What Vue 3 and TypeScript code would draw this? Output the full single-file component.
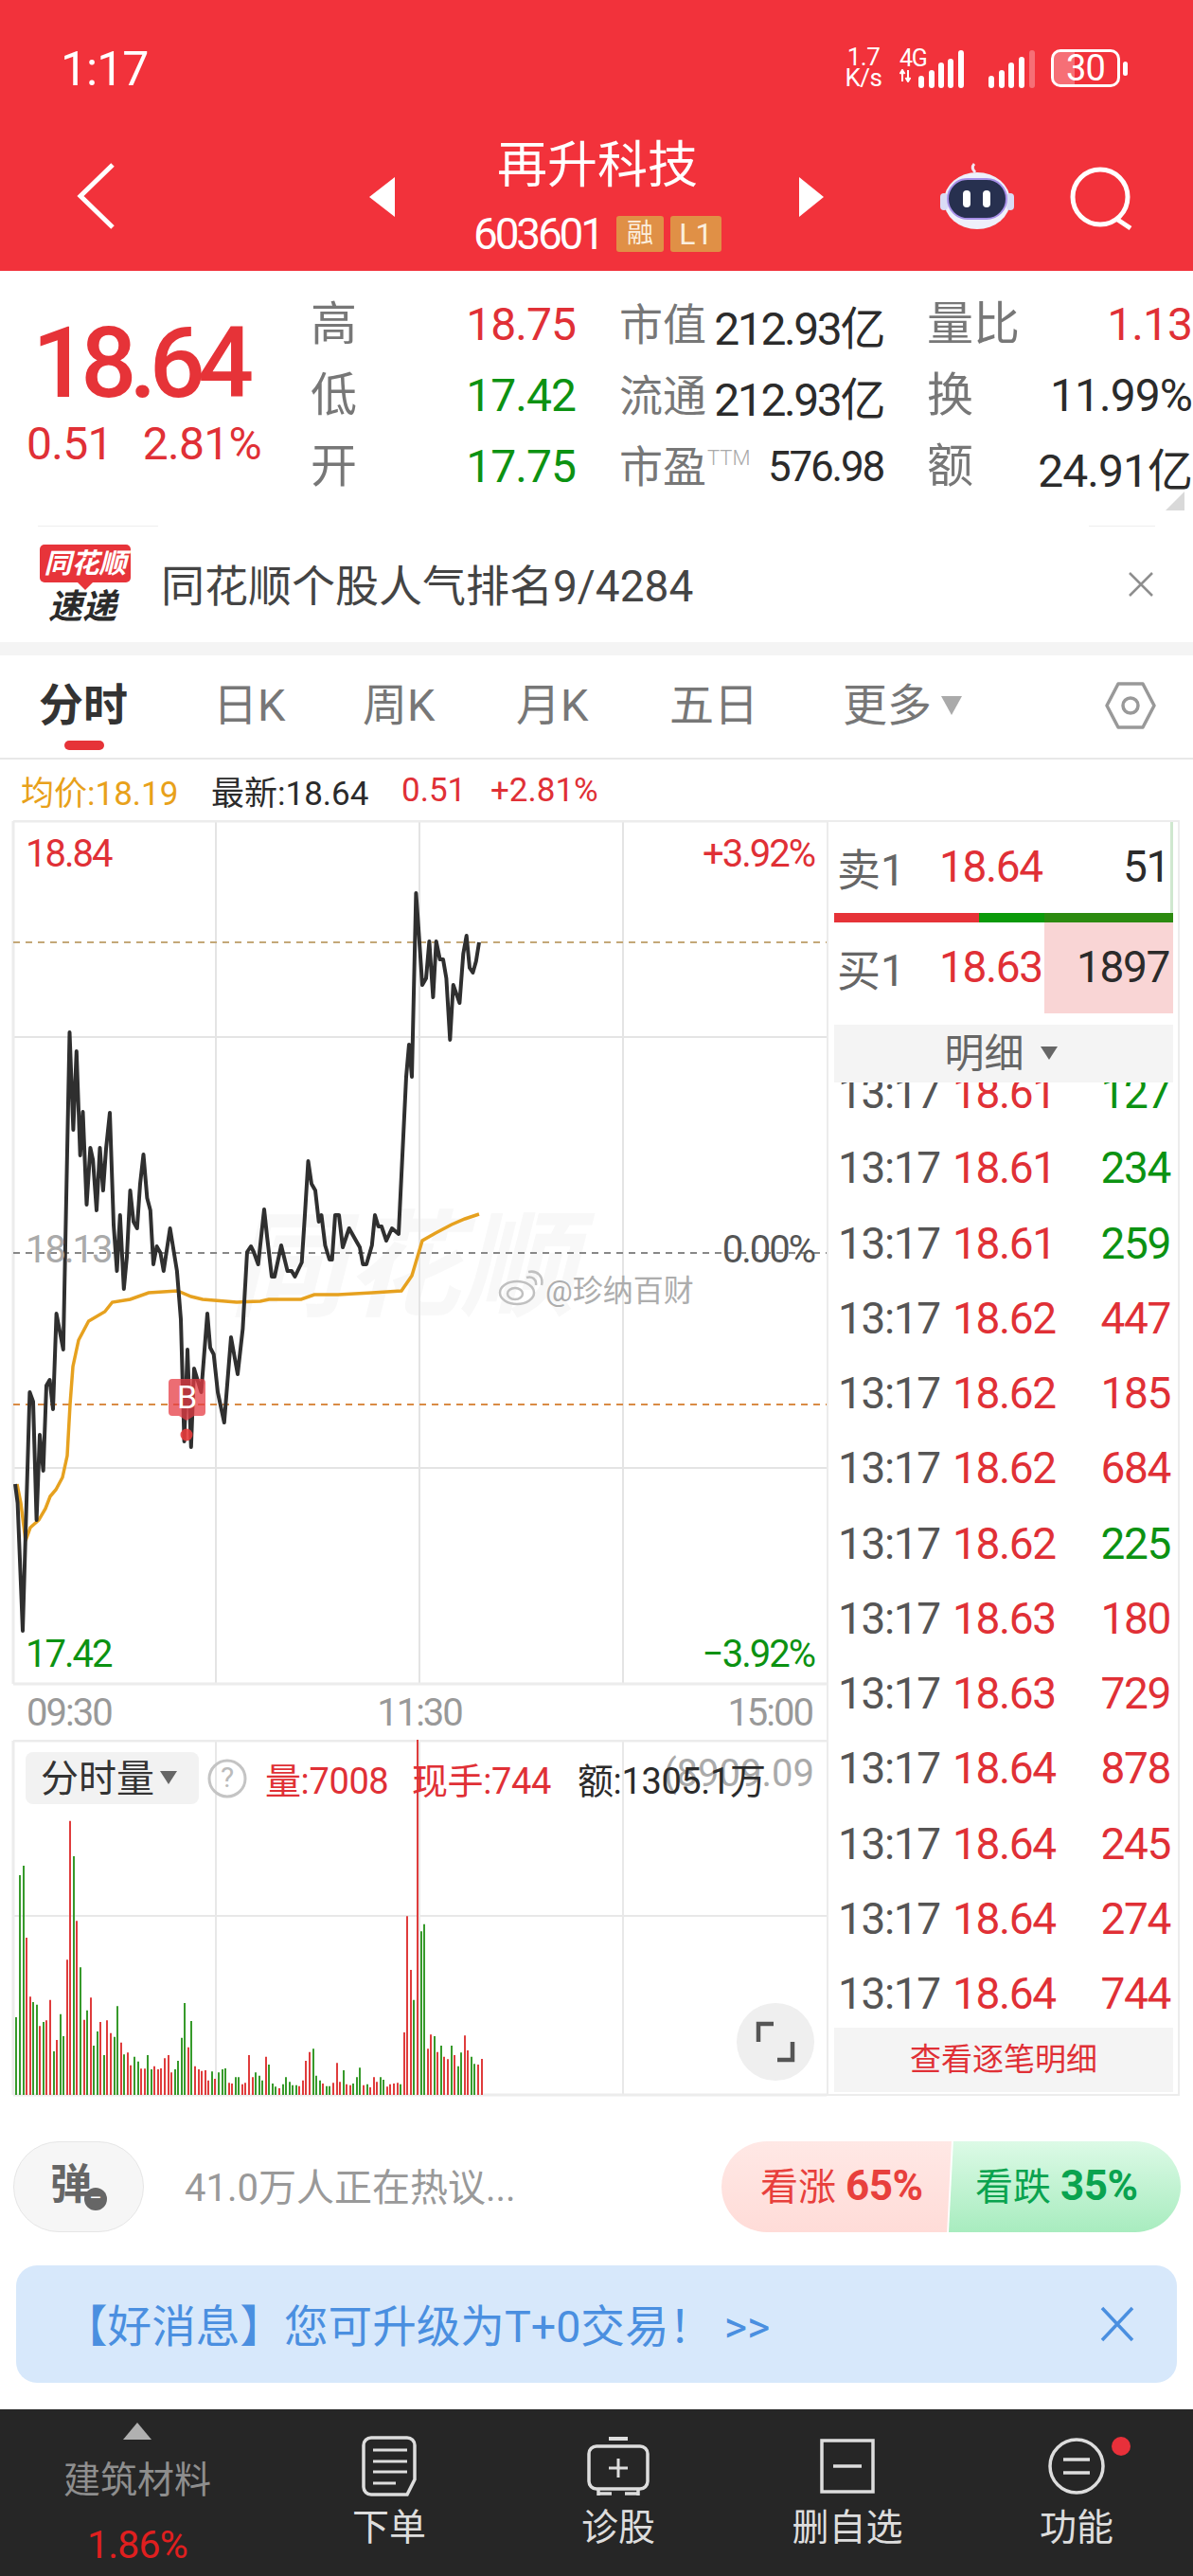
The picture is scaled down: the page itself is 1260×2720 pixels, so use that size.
<script setup lang="ts">
const stats = [
  [
    { label: '高', value: '18.75', cls: 'red' },
    { label: '市值', value: '212.93亿', cls: 'ink' },
    { label: '量比', value: '1.13', cls: 'red' },
  ],
  [
    { label: '低', value: '17.42', cls: 'green' },
    { label: '流通', value: '212.93亿', cls: 'ink' },
    { label: '换', value: '11.99%', cls: 'ink' },
  ],
  [
    { label: '开', value: '17.75', cls: 'green' },
    { label: '市盈', sup: 'TTM', value: '576.98', cls: 'ink small-value' },
    { label: '额', value: '24.91亿', cls: 'ink' },
  ],
]
const tabs = ['分时', '日K', '周K', '月K', '五日']
const ticks = [
  ['18.61', '127', 'green'], ['18.61', '234', 'green'], ['18.61', '259', 'green'],
  ['18.62', '447', 'red'], ['18.62', '185', 'red'], ['18.62', '684', 'red'],
  ['18.62', '225', 'green'], ['18.63', '180', 'red'], ['18.63', '729', 'red'],
  ['18.64', '878', 'red'], ['18.64', '245', 'red'], ['18.64', '274', 'red'], ['18.64', '744', 'red'],
]
const price = '16,1567 18.6,1587 24,1722 31.4,1470 35,1480 38.6,1605 42,1515 45.7,1553 49,1463 52.5,1457 56,1488 59.6,1387 66.8,1425 73.5,1090 77.4,1193 80.8,1110 84.7,1220 87.5,1174 91.5,1272 95.4,1212 98.2,1225 102,1278 105.5,1212 108.9,1257 112,1213 116,1175 120,1293 123.5,1342 126.8,1283 130.8,1361 134,1327 137.5,1257 141,1290 144.8,1297 148,1250 151.5,1219 155.4,1265 158.8,1278 162,1335 165.5,1316 169.5,1323 172.8,1342 179.6,1297 186.9,1342 191,1393 194.6,1522 198,1425 201.8,1528 205,1445 212.5,1470 219,1387 222,1423 225.7,1430 230,1470 236.8,1502 244,1412 251,1451 256.4,1403 261,1322 265,1316 268,1322 272.7,1335 279,1277 282,1305 287,1348 290,1348 297,1315 303.6,1342 308,1342 311.5,1348 318.7,1333 322,1283 325.5,1226 329,1250 333,1257 336.7,1290 339.5,1283 343.4,1315 348,1330 350.7,1330 354,1283 358,1283 362,1317 368.7,1297 376,1310 380,1317 383.3,1335 387,1335 392.8,1315 396,1283 399.6,1295 403,1295 408,1310 414,1297 421,1303 429,1137 432,1103 435,1137 439.4,943 442,980 446,1040 450,1033 453.4,994 457.4,1053 460.7,994 464.6,1013 468,1013 471.4,1033 475.3,1098 478.7,1040 485.4,1059 489.3,1007 492.7,988 496,1022 499.4,1027 502.8,1015 506,995'
const avg = '18,1567 22,1587 27,1627 32,1613 41,1605 48,1593 53,1580 59,1573 66,1560 71,1537 74,1483 77,1443 83,1415 93.6,1395 110.7,1385 118.6,1375 137.5,1372 157,1365 187.5,1363 201.8,1369 214,1372 250,1375 275,1374 284,1372 318,1372 332,1367 357,1367 393,1365 424,1363 435,1347 446,1310 460,1302 477,1293 491,1287 506,1282'

const volData = 'g1050 g600 g570 r798 r985 g1002 g1010 r1078 g1065 r1060 r995 g1158 r1122 g1040 g1110 r868 r428 g540 r745 g892 r1058 g1028 r988 g1140 g1095 r1065 g1170 r1060 r1100 g1112 g1015 r1130 g1168 r1162 r1202 g1175 g1190 r1213 r1213 g1170 g1215 r1205 r1215 r1212 r1180 r1170 r1225 g1215 g1188 g1115 g1005 r1145 g1062 r1205 r1215 r1220 r1218 r1250 g1222 r1245 g1225 g1215 g1212 r1258 r1260 g1240 g1240 r1262 r1258 r1170 r1240 g1225 g1235 g1250 r1175 g1200 g1260 g1270 r1275 g1262 g1240 g1255 g1265 g1265 r1268 r1250 r1188 r1160 g1150 g1235 g1250 r1260 g1268 g1268 r1258 r1195 r1255 g1218 r1262 r1265 g1260 g1240 g1210 r1265 g1262 r1272 r1240 r1255 g1240 g1248 r1270 r1262 r1260 r1258 g1262 r1098 r730 r900 g995 r170 g778 g755 r1150 r1105 g1110 r1160 g1140 r1175 r1183 g1140 r1170 g1205 g1162 r1108 r1155 g1175 g1198 r1200 r1182'
let redBars = ''
let greenBars = ''
volData.split(' ').forEach((item, i) => {
  const x = Math.round((31 + i * 6.3425) / 1.782)
  const y = (1780 + Number(item.slice(1)) / 3).toFixed(1)
  const seg = `M${x} 2212V${y}`
  if (item[0] === 'r') redBars += seg
  else greenBars += seg
})
</script>

<template>
  <div class="page">
    <header class="head">
      <div class="status">
        <span class="clock n">1:17</span>
        <div class="status-icons">
          <span class="speed n"><i>1.7</i><i>K/s</i></span>
          <span class="net n"><i>4G</i><svg width="12" height="14" viewBox="0 0 12 14"><path d="M3 13V3M0.5 5 3 1l2.5 4M9 1v10M6.5 9 9 13l2.500-4" fill="none" stroke="#fff" stroke-width="2"/></svg></span>
          <svg class="bars" width="50" height="40" viewBox="0 0 50 40"><g fill="#fff"><rect x="0" y="27" width="6" height="13" rx="3"/><rect x="11" y="21" width="6" height="19" rx="3"/><rect x="21" y="13" width="6" height="27" rx="3"/><rect x="31" y="9" width="6" height="31" rx="3"/><rect x="42" y="0" width="6" height="40" rx="3"/></g></svg>
          <svg class="bars sig2" width="50" height="40" viewBox="0 0 50 40"><g fill="#fff"><rect x="0" y="27" width="6" height="13" rx="3"/><rect x="11" y="21" width="6" height="19" rx="3"/><rect x="21" y="13" width="6" height="27" rx="3"/><rect x="32" y="7" width="6" height="33" rx="3"/><rect x="43" y="0" width="6" height="40" rx="3" opacity=".3"/></g></svg>
          <span class="battery n"><span class="battery-level"></span><span class="battery-num">30</span><span class="battery-nub"></span></span>
        </div>
      </div>
      <div class="nav">
        <svg class="back" width="42" height="72" viewBox="0 0 42 72"><path d="M38 3 4 36l34 33" fill="none" stroke="#fff" stroke-width="5"/></svg>
        <div class="title-wrap">
          <svg width="28" height="42" viewBox="0 0 28 42"><path d="M27 0V42L0 21Z" fill="#fff"/></svg>
          <div class="title">
            <div class="name">再升科技</div>
            <div class="code"><span class="n code-num">603601</span><span class="chip">融</span><span class="chip chip-n">L1</span></div>
          </div>
          <svg width="26" height="42" viewBox="0 0 26 42"><path d="M0 0V42L26 21Z" fill="#fff"/></svg>
        </div>
        <div class="nav-right">
          <svg class="robot" width="80" height="72" viewBox="0 0 80 72">
            <path d="M38 12c-3-3-4-6-1-9" fill="none" stroke="#f4e6f2" stroke-width="3"/>
            <ellipse cx="40" cy="42" rx="35" ry="30" fill="#eef0fb"/>
            <rect x="1" y="34" width="8" height="18" rx="4" fill="#d9dcf5"/>
            <rect x="71" y="34" width="8" height="18" rx="4" fill="#d9dcf5"/>
            <rect x="9" y="19" width="62" height="42" rx="21" fill="#27304f" stroke="#a78fe8" stroke-width="2"/>
            <rect x="25" y="31" width="8" height="18" rx="4" fill="#fff"/>
            <rect x="46" y="31" width="8" height="18" rx="4" fill="#fff"/>
          </svg>
          <svg class="search" width="70" height="70" viewBox="0 0 70 70"><circle cx="32" cy="33" r="29" fill="none" stroke="#fff" stroke-width="5"/><path d="M49 56l15 10" stroke="#fff" stroke-width="5"/></svg>
        </div>
      </div>
    </header>

    <section class="quote">
      <div class="now">
        <div class="now-price n">18.64</div>
        <div class="now-change n"><span>0.51</span><span>2.81%</span></div>
      </div>
      <div class="stats">
        <template v-for="(row, r) in stats" :key="r">
          <div v-for="cell in row" :key="cell.label" class="stat">
            <span class="stat-label">{{ cell.label }}<sup v-if="cell.sup">{{ cell.sup }}</sup></span>
            <span class="stat-value n" :class="cell.cls">{{ cell.value }}</span>
          </div>
        </template>
      </div>
      <span class="corner"></span>
    </section>

    <section class="ticker">
      <div class="logo">
        <span class="logo-top">同花顺</span>
        <span class="logo-bot">速递</span>
      </div>
      <span class="ticker-text">同花顺个股人气排名9/4284</span>
      <svg width="28" height="28" viewBox="0 0 28 28"><path d="M2 2 26 26M26 2 2 26" stroke="#8e8e8e" stroke-width="2.500"/></svg>
    </section>
    <div class="gap"></div>

    <nav class="tabs">
      <span v-for="(t, i) in tabs" :key="t" class="tab" :class="{ active: i === 0 }">{{ t }}</span>
      <span class="tab">更多<i class="tri"></i></span>
      <svg class="hex" width="54" height="52" viewBox="0 0 54 52"><path d="M14 3h26l12 23-12 23H14L2 26Z" fill="none" stroke="#999" stroke-width="3.500" stroke-linejoin="round"/><circle cx="27" cy="26" r="8" fill="none" stroke="#999" stroke-width="3.500"/></svg>
    </nav>
    <div class="info">
      <span class="amber">均价:18.19</span>
      <span class="ink">最新:18.64</span>
      <span class="red">0.51</span>
      <span class="red">+2.81%</span>
    </div>

    <section class="market">
      <div class="left">
        <div class="chart">
          <svg width="874" height="914" viewBox="0 866 874 914">
            <text x="242" y="1380" class="wm">同花顺</text>
            <g stroke="#e4e4e4" stroke-width="2" fill="none">
              <path d="M14 1095H873M14 1550H873M228 867V1778M443 867V1778M658 867V1778"/>
            </g>
            <path d="M14 867H873M14 1778H873M14 867V1778" stroke="#ececec" stroke-width="3" fill="none"/>
            <path d="M14 995H873" stroke="#c4a878" stroke-width="2" stroke-dasharray="7 6"/>
            <path d="M14 1323H873" stroke="#888" stroke-width="2" stroke-dasharray="7 6"/>
            <path d="M14 1483H873" stroke="#d98b45" stroke-width="2" stroke-dasharray="7 6"/>
            <polyline :points="avg" fill="none" stroke="#e6a11f" stroke-width="3.500"/>
            <polyline :points="price" fill="none" stroke="#2f2f2f" stroke-width="4" stroke-linejoin="round"/>
            <circle cx="197" cy="1515" r="6.500" fill="#e63c3c" opacity=".9"/>
            <path d="M182 1456h31a4 4 0 0 1 4 4v31a4 4 0 0 1-4 4h-8l-8 5-8-5h-7a4 4 0 0 1-4-4v-31a4 4 0 0 1 4-4Z" fill="#e63c44" opacity=".75"/>
          </svg>
          <span class="marker">B</span>
          <span class="tag n red tl">18.84</span>
          <span class="tag n red tr">+3.92%</span>
          <span class="tag n faint ml">18.13</span>
          <span class="tag n dim mr">0.00%</span>
          <span class="tag n green bl">17.42</span>
          <span class="tag n green br">−3.92%</span>
          <div class="weibo">
            <svg width="48" height="38" viewBox="0 0 48 38"><g fill="none" stroke="#c0c0c0" stroke-width="2.500"><ellipse cx="20" cy="24" rx="18" ry="12"/><ellipse cx="18" cy="25" rx="8" ry="6"/><path d="M30 8c6-2 11 2 10 8M32 2c10-2 16 5 14 14"/></g></svg>
            <span>@珍纳百财</span>
          </div>
        </div>
        <div class="axis n"><span>09:30</span><span>11:30</span><span>15:00</span></div>
        <div class="vol">
          <svg width="874" height="378" viewBox="0 1837 874 378">
            <path d="M14 2023H873M228 1837V2212M443 1837V2212M658 1837V2212" stroke="#e8e8e8" stroke-width="2" fill="none"/>
            <path d="M14 1838H873M14 2212H873M14 1838V2212" stroke="#ececec" stroke-width="3" fill="none"/>
            <path :d="greenBars" stroke="#379a2b" stroke-width="2" fill="none"/>
            <path :d="redBars" stroke="#df3c3c" stroke-width="2" fill="none"/>
          </svg>
          <span class="vol-max">(8909.09</span>
          <div class="vol-head">
            <span class="vol-select">分时量<i class="tri small"></i></span>
            <svg width="42" height="42" viewBox="0 0 42 42"><circle cx="21" cy="21" r="19" fill="none" stroke="#c4c4c4" stroke-width="3"/><text x="21" y="30" text-anchor="middle" class="q">?</text></svg>
            <span class="red vol-a">量:7008</span>
            <span class="red vol-b">现手:744</span>
            <span class="ink vol-c">额:1305.1万</span>
          </div>
          <span class="expand">
            <svg width="44" height="44" viewBox="0 0 44 44"><path d="M20 3H4V22M24 41H40V22" fill="none" stroke="#555" stroke-width="4.500"/></svg>
          </span>
        </div>
      </div>

      <aside class="book">
        <div class="ob-row n">
          <span class="ob-label">卖1</span><span class="red ob-price">18.64</span><span class="ink ob-qty">51</span>
          <span class="ob-sell-bar"></span>
        </div>
        <div class="ratio"><span class="ratio-red"></span><span class="ratio-green"></span><span class="ratio-dark"></span></div>
        <div class="ob-row n">
          <span class="ob-buy-bar"></span>
          <span class="ob-label">买1</span><span class="red ob-price">18.63</span><span class="ink ob-qty">1897</span>
        </div>
        <div class="detail-head">明细<i class="tri small"></i></div>
        <div class="ticks n">
          <div v-for="(t, i) in ticks" :key="i" class="tick">
            <span class="t-time">13:17</span><span class="red t-price">{{ t[0] }}</span><span class="t-qty" :class="t[2]">{{ t[1] }}</span>
          </div>
        </div>
        <div class="detail-foot">查看逐笔明细</div>
      </aside>
    </section>

    <section class="actions">
      <div class="danmu"><span>弹</span><i>–</i></div>
      <span class="hot">41.0万人正在热议...</span>
      <div class="vote">
        <span class="vote-up">看涨 <b>65%</b></span>
        <span class="vote-down">看跌 <b>35%</b></span>
      </div>
    </section>

    <section class="banner">
      <span>【好消息】您可升级为T+0交易！ &gt;&gt;</span>
      <svg width="36" height="38" viewBox="0 0 36 38"><path d="M2 2 34 36M34 2 2 36" stroke="#4a8fe0" stroke-width="3.500"/></svg>
    </section>

    <footer class="bar">
      <div class="sector">
        <i class="up"></i>
        <span class="sector-name">建筑材料</span>
        <span class="sector-pct n">1.86%</span>
      </div>
      <div class="act">
        <svg width="58" height="64" viewBox="0 0 58 64"><path d="M10 2h38a8 8 0 0 1 8 8v36l-8 16H10a8 8 0 0 1-8-8V10a8 8 0 0 1 8-8Z" fill="none" stroke="#ddd" stroke-width="3.500"/><path d="M12 15H48M12 27H48M12 38H48M12 50H36" stroke="#ddd" stroke-width="3"/></svg>
        <span>下单</span>
      </div>
      <div class="act">
        <svg width="66" height="64" viewBox="0 0 66 64"><path d="M23 3H43" stroke="#ddd" stroke-width="4"/><rect x="2" y="11" width="62" height="45" rx="8" fill="none" stroke="#ddd" stroke-width="3.500"/><path d="M33 24V44M23 34H43" stroke="#ddd" stroke-width="3"/><path d="M12 56v7M54 56v7M12 61H26M40 61H54" stroke="#ddd" stroke-width="3.500"/></svg>
        <span>诊股</span>
      </div>
      <div class="act">
        <svg width="58" height="60" viewBox="0 0 58 60"><rect x="2" y="3" width="54" height="54" fill="none" stroke="#ddd" stroke-width="3.500"/><path d="M14 30H44" stroke="#ddd" stroke-width="3.500"/></svg>
        <span>删自选</span>
      </div>
      <div class="act">
        <svg width="62" height="64" viewBox="0 0 62 64"><circle cx="31" cy="32" r="28" fill="none" stroke="#ddd" stroke-width="3.500"/><path d="M17 25H45M17 39H45" stroke="#ddd" stroke-width="3.500"/></svg>
        <span>功能</span>
        <i class="dot"></i>
      </div>
    </footer>
  </div>
</template>

<style scoped>
.page {
  width: 1260px;
  height: 2720px;
  overflow: hidden;
  background: #fff;
  font-family: Roboto, "Noto Sans CJK SC", sans-serif;
  color: #333;
  display: flex;
  flex-direction: column;
}
i { font-style: normal; }
.n { letter-spacing: -0.05em; }
.red { color: #e03036; }
.green { color: #0c9212; }
.ink { color: #2b2b2b; }
.amber { color: #e8a11a; }
.faint { color: #aaa; }
.dim { color: #555; }

.head { height: 286px; background: #f2323b; color: #fff; flex: none; }
.status { height: 130px; box-sizing: border-box; display: flex; justify-content: space-between; align-items: flex-start; padding: 48px 77px 0 64px; }
.clock { font-size: 50px; line-height: 50px; letter-spacing: -0.02em; }
.status-icons { display: flex; align-items: flex-start; }
.speed { display: flex; flex-direction: column; font-size: 26px; line-height: 22px; text-align: center; width: 40px; margin-top: 1px; letter-spacing: -0.02em; }
.net { margin-left: 18px; width: 36px; font-size: 25px; line-height: 22px; margin-top: 3px; display: flex; flex-direction: column; }
.bars { margin-top: 5px; margin-left: -16px; }
.bars.sig2 { margin-left: 24px; }
.battery { position: relative; margin-left: 16px; width: 73px; height: 40px; border: 3px solid #fff; border-radius: 10px; box-sizing: border-box; margin-top: 4px; text-align: center; }
.battery-level { position: absolute; left: 0; top: 0; bottom: 0; width: 22px; background: rgba(255, 255, 255, 0.3); border-radius: 7px 0 0 7px; }
.battery-num { position: relative; font-size: 38px; line-height: 34px; letter-spacing: -0.02em; }
.battery-nub { position: absolute; right: -11px; top: 10px; width: 5px; height: 15px; border-radius: 3px; background: #fff; }
.nav { height: 156px; display: flex; align-items: flex-start; position: relative; }
.back { margin: 41px 0 0 81px; }
.title-wrap { position: absolute; left: 390px; width: 480px; top: 0; display: flex; justify-content: space-between; align-items: flex-start; }
.title-wrap > svg { margin-top: 57px; }
.title { text-align: center; }
.name { font-size: 53px; line-height: 72px; margin-top: 9px; }
.code { display: flex; align-items: center; gap: 7px; margin-top: 13px; justify-content: center; }
.code-num { font-size: 46px; line-height: 46px; margin-right: 8px; letter-spacing: -0.07em; }
.chip { width: 50px; height: 38px; background: #e09046; border-radius: 3px; text-align: center; font-size: 28px; line-height: 38px; color: #fbeede; }
.chip-n { width: 54px; font-size: 32px; }
.nav-right { margin-left: auto; margin-right: 60px; display: flex; align-items: flex-start; gap: 58px; margin-top: 40px; }
.search { margin-top: 5px; }

.quote { height: 269px; flex: none; display: flex; position: relative; }
.now { width: 328px; flex: none; padding-left: 28px; box-sizing: border-box; }
.now-price { font-size: 104px; line-height: 110px; margin-top: 43px; margin-left: 6px; font-weight: 500; color: #e63338; letter-spacing: -0.075em; }
.now-change { font-size: 48px; line-height: 56px; color: #e03036; display: flex; gap: 32px; margin-top: 2px; letter-spacing: -0.015em; }
.stats { padding-top: 19px; display: grid; grid-template-columns: 280px 279px 280px; grid-auto-rows: 75px; column-gap: 46px; height: 225px; }
.stat { display: flex; justify-content: space-between; align-items: center; white-space: nowrap; }
.stat-label { font-size: 49px; color: #777; line-height: 60px; }
.stat:nth-child(3n+2) .stat-label { font-size: 46px; }
.stat-label sup { font-size: 22px; color: #aaa; vertical-align: 18px; line-height: 0; font-weight: 300; margin-left: 1px; }
.stat-value { font-size: 48px; letter-spacing: -0.02em; }
.stat:nth-child(3n+2) .stat-value { letter-spacing: -0.05em; }
.stat .small-value { font-size: 44px; }
.corner { position: absolute; right: 9px; bottom: 16px; border-left: 20px solid transparent; border-bottom: 20px solid #d9d9d9; }

.ticker { height: 123px; flex: none; display: flex; align-items: center; padding: 0 41px 0 42px; position: relative; }
.ticker::before, .ticker::after { content: ""; position: absolute; top: 0; height: 1px; background: #eee; }
.ticker::before { left: 40px; width: 127px; }
.ticker::after { left: 1150px; width: 70px; }
.logo { width: 96px; display: flex; flex-direction: column; align-items: center; flex: none; }
.logo-top { width: 96px; height: 40px; background: #e7343a; border-radius: 5px; color: #fff; font-size: 29px; line-height: 40px; font-style: italic; font-weight: 700; text-align: center; position: relative; }
.logo-top::after { content: ""; position: absolute; left: 40px; bottom: -8px; border-left: 8px solid transparent; border-right: 8px solid transparent; border-top: 8px solid #e7343a; }
.logo-bot { font-size: 36px; line-height: 36px; font-weight: 700; font-style: italic; color: #2b2b2b; margin: 8px 6px 0 0; }
.ticker-text { font-size: 46px; margin: -3px 0 0 32px; flex: 1; color: #444; white-space: nowrap; }
.gap { height: 14px; background: #f4f4f4; flex: none; }

.tabs { height: 110px; box-sizing: border-box; flex: none; display: grid; grid-template-columns: 184px 158px 162px 162px 183px 277px auto; padding-left: 41px; align-items: center; border-bottom: 2px solid #e8e8e8; position: relative; }
.tab { font-size: 47px; color: #777; line-height: 64px; margin-top: -2px; position: relative; white-space: nowrap; }
.tab.active { color: #333; font-weight: 700; }
.tab.active::after { content: ""; position: absolute; left: 27px; width: 42px; height: 10px; border-radius: 5px; background: #e63338; top: 69px; }
.tri { display: inline-block; border-left: 11px solid transparent; border-right: 11px solid transparent; border-top: 20px solid #aaa; margin-left: 10px; vertical-align: 6px; }
.tri.small { border-left-width: 9px; border-right-width: 9px; border-top: 14px solid #666; vertical-align: 8px; }
.hex { margin-top: -2px; }

.info { height: 64px; flex: none; display: flex; align-items: center; font-size: 35px; padding-left: 22px; }
.info span:nth-child(1) { width: 201px; }
.info span:nth-child(2) { width: 201px; }
.info span:nth-child(3) { width: 94px; }

.market { height: 1349px; flex: none; display: flex; }
.left { width: 873px; flex: none; }
.chart { height: 914px; position: relative; }
.chart svg:first-child { display: block; }
.wm { font-size: 122px; font-weight: 700; font-style: italic; fill: #f8f8f8; }
.q { font-size: 30px; fill: #bbb; }
.marker { position: absolute; left: 178px; top: 590px; width: 39px; text-align: center; color: #fff; font-size: 34px; line-height: 39px; }
.tag { position: absolute; font-size: 40px; line-height: 40px; }
.tl { left: 27px; top: 16px; }
.tr { right: 13px; top: 16px; }
.ml { left: 27px; top: 434px; }
.mr { right: 13px; top: 434px; }
.bl { left: 27px; bottom: 13px; }
.br { right: 13px; bottom: 13px; }
.weibo { position: absolute; left: 526px; top: 471px; display: flex; align-items: center; gap: 2px; font-size: 32px; color: #adadad; text-shadow: 0 0 3px #fff; white-space: nowrap; }
.axis { height: 57px; display: flex; justify-content: space-between; align-items: center; font-size: 40px; color: #999; padding: 0 15px 0 28px; }
.vol { height: 378px; position: relative; }
.vol svg:first-child { display: block; }
.vol-max { position: absolute; right: 13px; top: 12px; font-size: 40px; color: #aaa; white-space: nowrap; }
.vol-head { position: absolute; left: 27px; top: 13px; display: flex; align-items: center; font-size: 38px; white-space: nowrap; letter-spacing: -0.01em; }
.vol-select { width: 183px; height: 55px; line-height: 57px; box-sizing: border-box; padding-left: 16px; background: #f2f2f2; border-radius: 8px; color: #333; letter-spacing: 0; font-size: 40px; }
.vol-select .tri { margin-left: 6px; }
.vol-head svg { margin: 0 19px 0 9px; }
.vol-a { width: 155px; }
.vol-b { width: 175px; }
.expand { position: absolute; left: 778px; top: 278px; width: 82px; height: 82px; border-radius: 50%; background: #efefef; display: flex; align-items: center; justify-content: center; }

.book { width: 373px; flex: none; box-sizing: border-box; border: 2px solid #ececec; padding: 0 5px 0 6px; display: flex; flex-direction: column; height: 1347px; position: relative; letter-spacing: 0; }
.book .n { letter-spacing: -0.03em; }
.ob-row { height: 96px; flex: none; display: flex; align-items: center; font-size: 46px; padding: 0 0 3px 3px; box-sizing: border-box; position: relative; }
.ob-label { width: 108px; color: #666; letter-spacing: 0; font-size: 46px; position: relative; }
.ob-price { width: 120px; position: relative; }
.ob-qty { flex: 1; text-align: right; padding-right: 4px; position: relative; }
.ob-sell-bar { position: absolute; right: 0; top: 0; bottom: 0; width: 3px; background: #cfe8cf; }
.ob-buy-bar { position: absolute; right: 0; top: 0; bottom: 0; width: 136px; background: #f9d5d5; }
.ratio { height: 10px; flex: none; display: flex; }
.ratio-red { width: 153px; background: #e63338; }
.ratio-green { width: 69px; background: #0b9a0a; }
.ratio-dark { flex: 1; background: #2c8a10; }
.detail-head { height: 61px; flex: none; background: #f4f4f4; margin-top: 12px; text-align: center; font-size: 42px; line-height: 61px; color: #666; position: relative; z-index: 1; padding-right: 6px; }
.detail-head .tri { margin-left: 17px; }
.ticks { flex: 1; overflow: hidden; font-size: 46px; min-height: 0; }
.tick { height: 79.25px; display: flex; align-items: center; padding-left: 4px; }
.tick:first-child { margin-top: -28.500px; }
.t-time { width: 121px; color: #555; }
.t-price { width: 108px; }
.t-qty { flex: 1; text-align: right; padding-right: 3px; }
.detail-foot { height: 68px; flex: none; background: #f4f4f4; margin-bottom: 2px; color: #e03036; text-align: center; font-size: 33px; line-height: 68px; }

.actions { height: 177px; flex: none; display: flex; align-items: flex-start; padding: 46px 13px 0 14px; box-sizing: border-box; position: relative; }
.danmu { width: 138px; height: 96px; border-radius: 48px; border: 1px solid #e6e6e6; background: #f6f6f6; box-sizing: border-box; position: relative; font-size: 44px; font-weight: 700; color: #666; line-height: 90px; padding-left: 38px; }
.danmu i { position: absolute; left: 74px; top: 48px; width: 24px; height: 24px; border-radius: 50%; background: #666; color: #fff; font-size: 20px; line-height: 22px; text-align: center; font-weight: 400; }
.hot { font-size: 40px; color: #999; margin-left: 43px; line-height: 100px; white-space: nowrap; }
.vote { margin-left: auto; width: 485px; height: 96px; display: flex; font-size: 40px; white-space: nowrap; }
.vote > span { height: 96px; line-height: 94px; box-sizing: border-box; }
.vote b { font-weight: 700; font-size: 44px; letter-spacing: -0.01em; }
.vote-up { width: 243px; border-radius: 48px 0 0 48px; background: linear-gradient(#ffe8e5, #ffdcd8); color: #e8403c; padding-left: 41px; clip-path: polygon(0 0, 100% 0, 98% 100%, 0 100%); }
.vote-down { width: 245px; margin-left: -3px; border-radius: 0 48px 48px 0; background: linear-gradient(#dcfae6, #a8ecbf); color: #0aa34f; padding-left: 28px; clip-path: polygon(2% 0, 100% 0, 100% 100%, 0 100%); }

.banner { height: 124px; flex: none; margin: 0 17px; box-sizing: border-box; border-radius: 22px; background: #d7e8fb; display: flex; align-items: center; justify-content: space-between; padding: 0 45px 0 50px; color: #4a8fe0; font-size: 46.600px; white-space: nowrap; }
.banner span { margin-top: -4px; }

.bar { flex: 1; margin-top: 28px; background: #262626; display: flex; position: relative; color: #ddd; font-size: 39px; }
.sector { width: 290px; flex: none; display: flex; flex-direction: column; align-items: center; }
.up { margin-top: 14px; border-left: 15px solid transparent; border-right: 15px solid transparent; border-bottom: 18px solid #b0b0b0; }
.sector-name { color: #8e8e8e; margin-top: 20px; line-height: 46px; }
.sector-pct { color: #e01f1f; font-size: 41px; line-height: 46px; margin-top: 22px; letter-spacing: -0.02em; }
.act { width: 242px; flex: none; display: flex; flex-direction: column; align-items: center; position: relative; }
.act svg { margin-top: 28px; height: 64px; }
.act span { line-height: 46px; margin-top: 10px; }
.dot { position: absolute; left: 158px; top: 29px; width: 20px; height: 20px; border-radius: 50%; background: #e8303a; }
</style>

<style>
html, body { margin: 0; background: #fff; }
</style>
